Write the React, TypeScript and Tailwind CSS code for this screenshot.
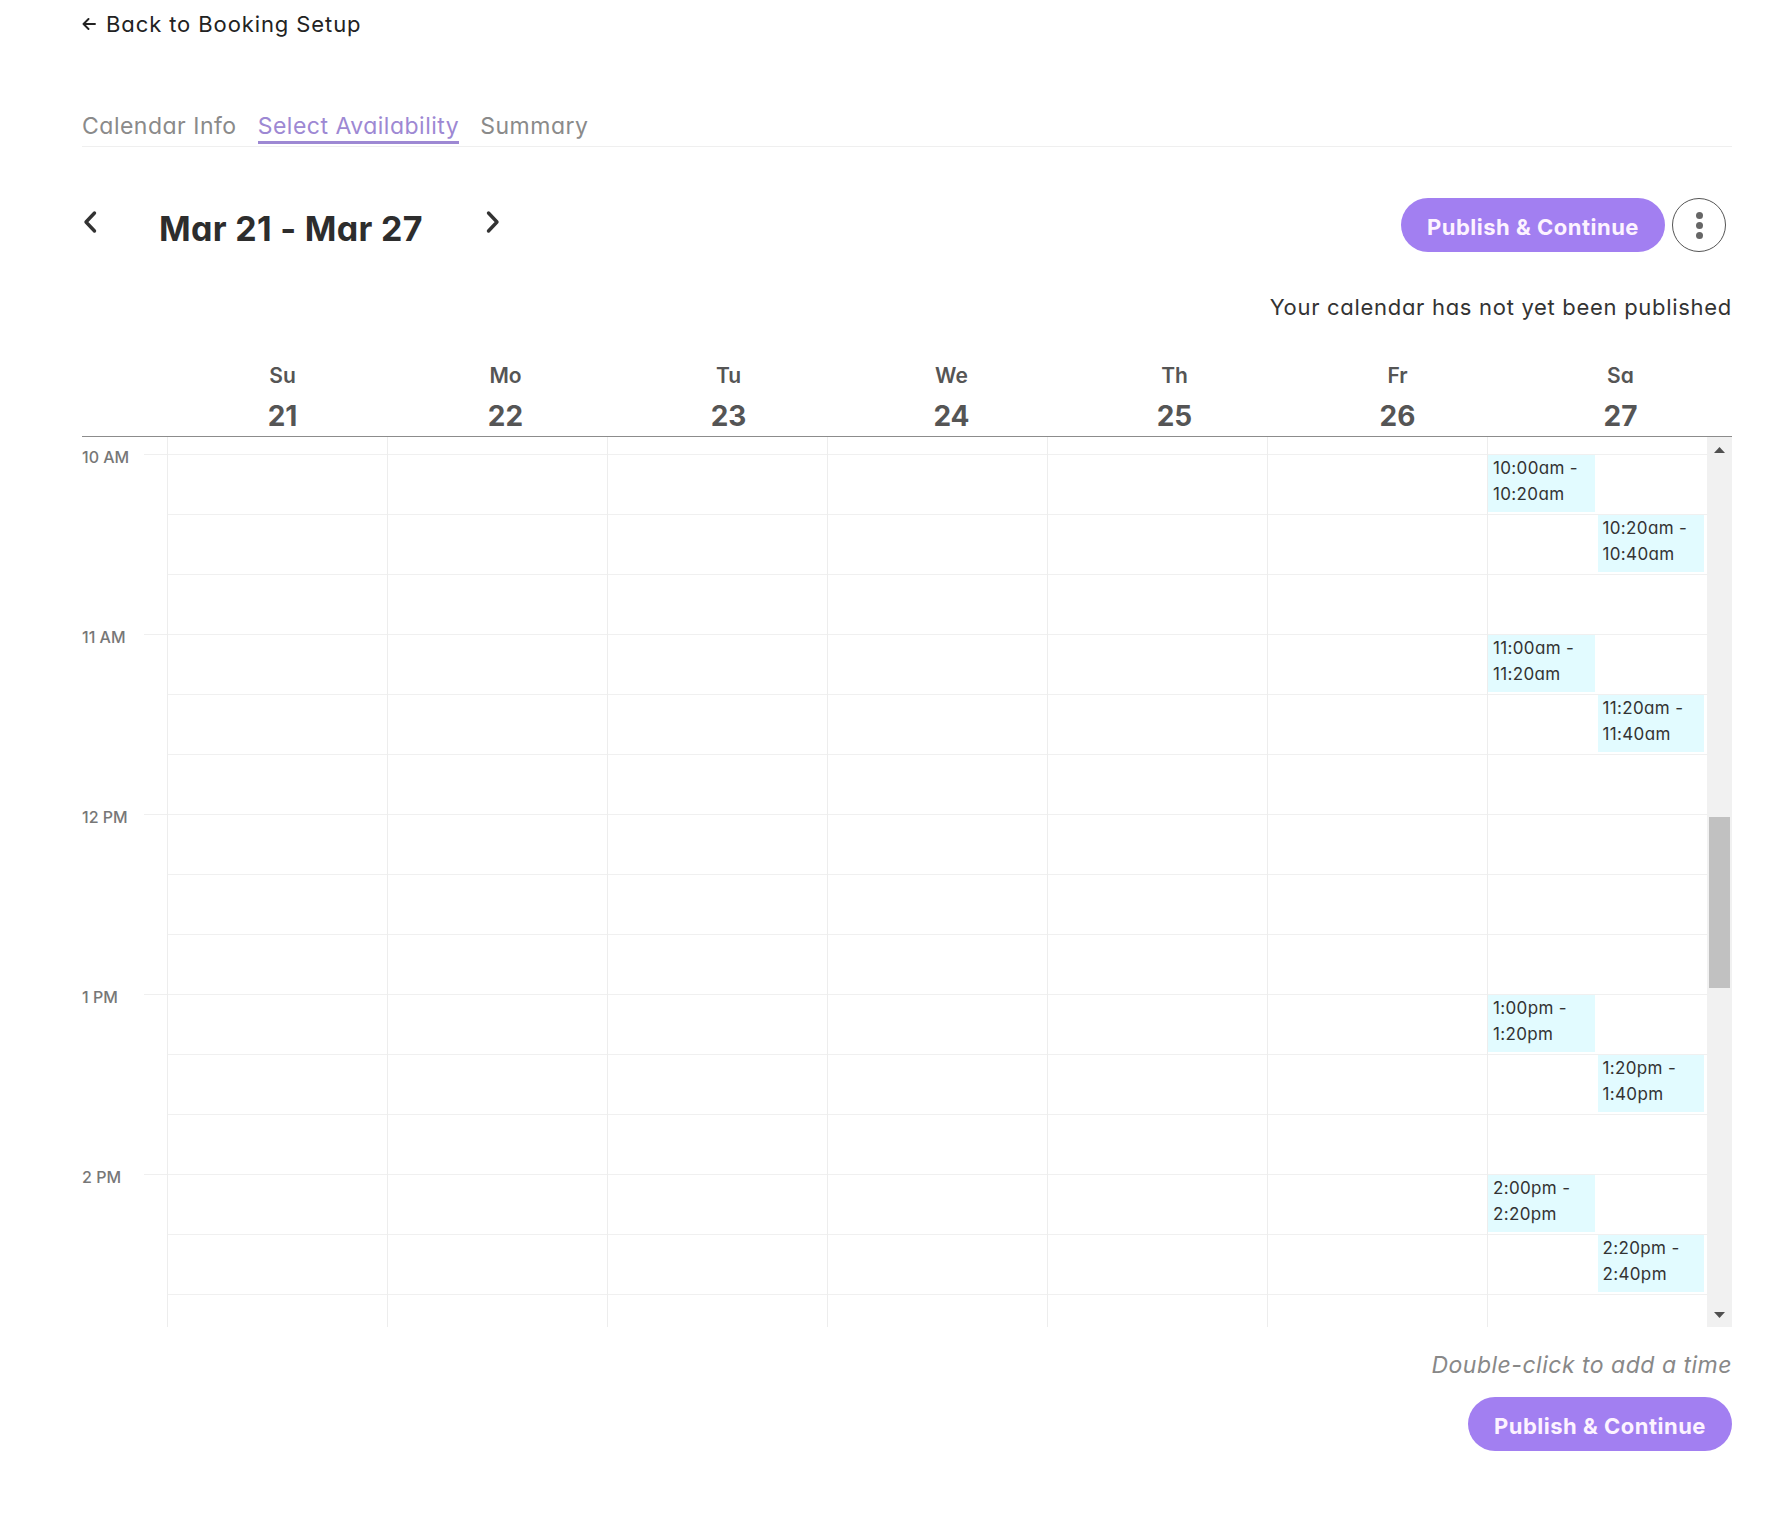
import React from 'react';

const days = [
  { name: 'Su', date: 21 },
  { name: 'Mo', date: 22 },
  { name: 'Tu', date: 23 },
  { name: 'We', date: 24 },
  { name: 'Th', date: 25 },
  { name: 'Fr', date: 26 },
  { name: 'Sa', date: 27 },
];

const hours = ['10 AM', '11 AM', '12 PM', '1 PM', '2 PM'];

// 20 minute slots counted from 10:00
const SLOT_COUNT = 15;

const saturday: Record<number, { lines: [string, string]; right?: boolean }> = {
  0: { lines: ['10:00am -', '10:20am'] },
  1: { lines: ['10:20am -', '10:40am'], right: true },
  3: { lines: ['11:00am -', '11:20am'] },
  4: { lines: ['11:20am -', '11:40am'], right: true },
  9: { lines: ['1:00pm -', '1:20pm'] },
  10: { lines: ['1:20pm -', '1:40pm'], right: true },
  12: { lines: ['2:00pm -', '2:20pm'] },
  13: { lines: ['2:20pm -', '2:40pm'], right: true },
};

const Chevron = ({ dir }: { dir: 'left' | 'right' }) => (
  <svg width="16" height="24" viewBox="0 0 16 24" fill="none">
    <path
      d={dir === 'left' ? 'M12.5 3 L4 12 L12.5 21' : 'M3.5 3 L12 12 L3.5 21'}
      stroke="#333"
      strokeWidth="3.4"
      strokeLinecap="round"
      strokeLinejoin="round"
    />
  </svg>
);

const PublishButton = () => (
  <button className="h-[54px] w-[264px] rounded-full bg-[#a27ff1] pt-[4px] text-[22px] font-bold tracking-[0.5px] text-[#fdf3ff]">
    Publish &amp; Continue
  </button>
);

const Scrollbar = () => (
  <div className="flex w-[25px] flex-col bg-[#f1f1f1]">
    <div className="flex h-[25px] items-center justify-center">
      <svg width="11" height="6" viewBox="0 0 11 6">
        <path d="M0 6 L5.5 0 L11 6 Z" fill="#505050" />
      </svg>
    </div>
    <div className="h-[355px]" />
    <div className="mx-[2px] h-[171px] bg-[#c1c1c1]" />
    <div className="flex-1" />
    <div className="flex h-[25px] items-center justify-center">
      <svg width="11" height="6" viewBox="0 0 11 6">
        <path d="M0 0 L11 0 L5.5 6 Z" fill="#505050" />
      </svg>
    </div>
  </div>
);

const DayColumn = ({ withTimes }: { withTimes: boolean }) => (
  <div className="flex-1 border-l border-[#ededed] pt-[17px]">
    {Array.from({ length: SLOT_COUNT }).map((_, i) => {
      const slot = withTimes ? saturday[i] : undefined;
      return (
        <div key={i} className="grid h-[60px] grid-cols-2 border-t border-[#f0f0f0]">
          {slot && (
            <div
              className={`mr-[3px] h-[57px] bg-[#e2fbff] px-[5px] text-[17px] leading-[26px] tracking-[0.35px] text-[#333] ${
                slot.right ? 'col-start-2' : 'col-start-1'
              }`}
            >
              <div>{slot.lines[0]}</div>
              <div>{slot.lines[1]}</div>
            </div>
          )}
        </div>
      );
    })}
  </div>
);

export default function App() {
  return (
    <div className="min-h-screen bg-white pl-[82px] pr-[53px] font-['Inter',sans-serif] text-[#333] [font-feature-settings:'cv11']">
      {/* back link */}
      <a href="#" className="mt-[10px] flex items-center gap-[10px] text-[22px] leading-[28px] tracking-[0.9px] text-[#222]">
        <svg width="14" height="12" viewBox="0 0 14 12" fill="none">
          <path d="M13 6H1.5 M6.5 1 L1.5 6 L6.5 11" stroke="#222" strokeWidth="1.9" strokeLinecap="round" strokeLinejoin="round" />
        </svg>
        Back to Booking Setup
      </a>

      {/* steps */}
      <div className="mt-[73px] flex gap-[21px] border-b border-[#efefef] pb-[2px] text-[23px] leading-[30px] tracking-[0.5px]">
        <span className="border-b-[3px] border-transparent text-[#8a8a8a]">Calendar Info</span>
        <span className="border-b-[3px] border-[#9d88d3] text-[#9d88d3]">Select Availability</span>
        <span className="border-b-[3px] border-transparent text-[#8a8a8a]">Summary</span>
      </div>

      {/* week navigation */}
      <div className="mt-[51px] flex h-[54px] items-center">
        <button className="-mt-[6px] flex w-[16px] items-center">
          <Chevron dir="left" />
        </button>
        <h1 className="ml-[61px] mt-[7px] text-[34px] font-bold leading-[44px] tracking-[0.3px] text-[#2d2d2d]">
          Mar 21 - Mar 27
        </h1>
        <button className="-mt-[6px] ml-[62px] flex w-[16px] items-center">
          <Chevron dir="right" />
        </button>
        <div className="ml-auto mr-[6px] flex items-center gap-[7px]">
          <PublishButton />
          <button className="flex h-[54px] w-[54px] flex-col items-center justify-center gap-[3px] rounded-full border border-[#555]">
            <span className="h-[7px] w-[7px] rounded-full bg-[#666]" />
            <span className="h-[7px] w-[7px] rounded-full bg-[#666]" />
            <span className="h-[7px] w-[7px] rounded-full bg-[#666]" />
          </button>
        </div>
      </div>

      <p className="mt-[41px] text-right text-[22px] leading-[28px] tracking-[0.7px] text-[#333]">
        Your calendar has not yet been published
      </p>

      {/* day headers */}
      <div className="mt-[41px] flex border-b border-[#8c8c8c] pb-[2px]">
        <div className="w-[89px]" />
        {days.map((d) => (
          <div key={d.name} className="flex flex-1 flex-col items-center text-[#555]">
            <span className="text-[21px] font-semibold leading-[28px]">{d.name}</span>
            <span className="mt-[8px] text-[28px] font-bold leading-[36px]">{d.date}</span>
          </div>
        ))}
      </div>

      {/* time grid */}
      <div className="flex h-[890px] overflow-hidden">
        <div className="w-[85px] pt-[17px]">
          {hours.map((h) => (
            <div key={h} className="flex h-[180px] items-start">
              <span className="-mt-[6px] w-[62px] text-[16px] font-medium leading-[18px] text-[#777]">{h}</span>
              <span className="w-[23px] border-t border-[#efefef]" />
            </div>
          ))}
        </div>
        {days.map((d) => (
          <DayColumn key={d.name} withTimes={d.name === 'Sa'} />
        ))}
        <Scrollbar />
      </div>

      <p className="mt-[24px] text-right text-[23px] italic leading-[28px] tracking-[0.5px] text-[#888]">
        Double-click to add a time
      </p>

      <div className="mt-[18px] flex justify-end pb-[80px]">
        <PublishButton />
      </div>
    </div>
  );
}
